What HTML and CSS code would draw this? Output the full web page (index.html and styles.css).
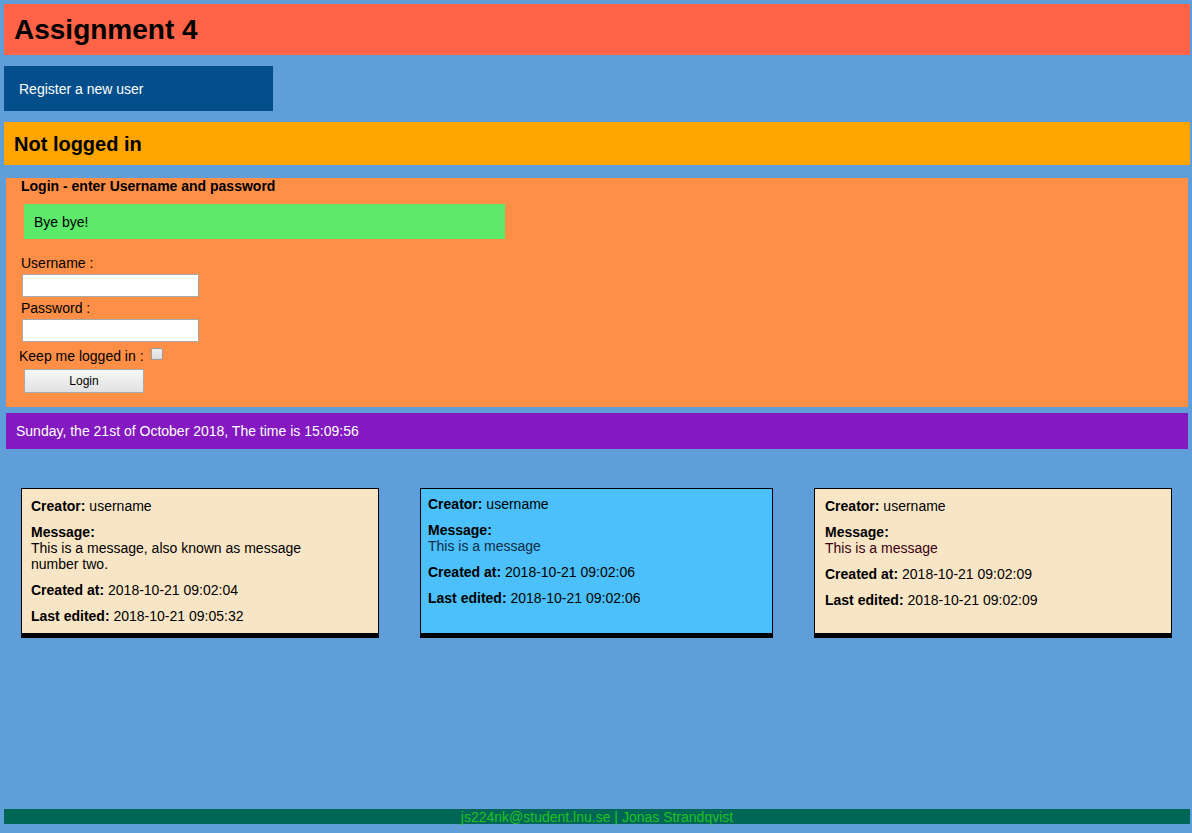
FILE: index.html
```html
<!DOCTYPE html>
<html lang="en">
<head>
<meta charset="utf-8">
<title>Assignment 4</title>
<link rel="stylesheet" href="styles.css">
</head>
<body>
<div class="page">
  <header class="site-header"><h1>Assignment 4</h1></header>
  <a class="register" href="#">Register a new user</a>
  <div class="status"><h2>Not logged in</h2></div>
  <form class="login">
    <div class="login-title">Login - enter Username and password</div>
    <div class="flash">Bye bye!</div>
    <label class="field-label">Username :</label>
    <input class="text-input" type="text">
    <label class="field-label">Password :</label>
    <input class="text-input" type="password">
    <div class="keep"><span>Keep me logged in :</span><span class="checkbox"></span></div>
    <button class="login-btn" type="button">Login</button>
  </form>
  <div class="clock">Sunday, the 21st of October 2018, The time is 15:09:56</div>
  <div class="cards">
    <div class="card card-wheat card-a">
      <p><b>Creator:</b> username</p>
      <p><b>Message:</b><br><span class="msg">This is a message, also known as message number two.</span></p>
      <p><b>Created at:</b> 2018-10-21 09:02:04</p>
      <p><b>Last edited:</b> 2018-10-21 09:05:32</p>
    </div>
    <div class="card card-blue card-b">
      <p><b>Creator:</b> username</p>
      <p><b>Message:</b><br><span class="msg msg-blue">This is a message</span></p>
      <p><b>Created at:</b> 2018-10-21 09:02:06</p>
      <p><b>Last edited:</b> 2018-10-21 09:02:06</p>
    </div>
    <div class="card card-wheat card-c">
      <p><b>Creator:</b> username</p>
      <p><b>Message:</b><br><span class="msg msg-red">This is a message</span></p>
      <p><b>Created at:</b> 2018-10-21 09:02:09</p>
      <p><b>Last edited:</b> 2018-10-21 09:02:09</p>
    </div>
  </div>
  <footer class="footer">js224nk@student.lnu.se | Jonas Strandqvist</footer>
</div>
</body>
</html>
```
FILE: styles.css
```css
* { box-sizing: border-box; }
html, body { margin: 0; padding: 0; }
body {
  background: #5f9ed9;
  font-family: "Liberation Sans", Arial, sans-serif;
  font-size: 14px;
  color: #000;
}
.page {
  min-height: 100vh;
  display: flex;
  flex-direction: column;
  align-items: stretch;
  padding: 4px 2px 9px 4px;
}
.site-header {
  background: #ff6347;
  height: 51px;
  display: flex;
  align-items: center;
  padding-left: 10px;
}
.site-header h1 {
  margin: 0;
  font-size: 28px;
  font-weight: bold;
}
.register {
  margin-top: 11px;
  width: 269px;
  height: 45px;
  background: #044f8b;
  color: #fff;
  text-decoration: none;
  display: flex;
  align-items: center;
  padding-left: 15px;
  font-size: 14px;
}
.status {
  margin-top: 11px;
  background: #ffa500;
  height: 43px;
  display: flex;
  align-items: center;
  padding-left: 10px;
}
.status h2 { margin: 1px 0 0 0; font-size: 20px; font-weight: bold; }
.login {
  margin: 13px 2px 0 2px;
  background: #ff8f47;
  height: 229px;
  display: flex;
  flex-direction: column;
  align-items: flex-start;
  padding: 0 0 0 15px;
}
.login-title {
  font-weight: bold;
  font-size: 14px;
  line-height: 16px;
  margin-top: 0;
}
.flash {
  margin-top: 10px;
  margin-left: 3px;
  width: 481px;
  height: 35px;
  background: #5dea6a;
  display: flex;
  align-items: center;
  padding-left: 10px;
}
.field-label {
  margin-top: 16px;
  line-height: 16px;
}
.text-input + .field-label { margin-top: 3px; }
.text-input {
  margin: 3px 0 0 1px;
  width: 177px;
  height: 23px;
  border: 1px solid #a9a9a9;
  background: #fff;
  padding: 0 3px;
}
.keep {
  margin-top: 6px;
  margin-left: -2px;
  display: flex;
  align-items: flex-start;
  line-height: 16px;
}
.checkbox {
  display: inline-block;
  width: 12px;
  height: 12px;
  margin: 0 0 0 7px;
  background: linear-gradient(#ededed, #dcdcdc);
  border: 1px solid #9a9a9a;
  border-radius: 2px;
}
.login-btn {
  margin-top: 5px;
  margin-left: 3px;
  width: 120px;
  height: 24px;
  border: 1px solid #a9a9a9;
  border-radius: 0;
  background: linear-gradient(#f8f8f8, #e1e1e1);
  font-family: "Liberation Sans", Arial, sans-serif;
  font-size: 12px;
  color: #000;
  padding: 0;
}
.clock {
  margin: 6px 2px 0 2px;
  height: 36px;
  background: #8419c1;
  color: #fff;
  display: flex;
  align-items: center;
  padding-left: 10px;
}
.cards {
  margin-top: 39px;
  display: flex;
  gap: 41px;
  padding-left: 17px;
  align-items: stretch;
}
.card {
  height: 150px;
  border: 1px solid #000;
  border-bottom-width: 5px;
  padding: 9px 9px 0 9px;
  line-height: 16px;
}
.card p { margin: 0 0 10px 0; }
.card-wheat { background: #f8e5c6; }
.card-blue { background: #4bc0fa; }
.card-a { width: 358px; }
.card-b { width: 353px; padding: 7px 7px 0 7px; }
.card-c { width: 358px; padding-left: 10px; }
.msg { display: inline-block; max-width: 300px; }
.msg-blue { color: #0e2c46; }
.msg-red { color: #3a0010; }
.footer {
  margin-top: auto;
  height: 15px;
  background: #006756;
  color: #22c222;
  text-align: center;
  line-height: 16px;
  font-size: 14px;
}
```
